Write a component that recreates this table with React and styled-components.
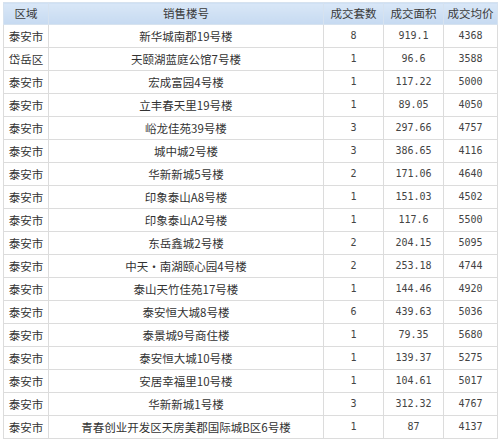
import React from "react";
import styled, { createGlobalStyle } from "styled-components";

const Global = createGlobalStyle`
  html, body { margin: 0; padding: 0; background: #fff; }
  body { font-family: "Noto Sans CJK SC", "Noto Sans", sans-serif; }
`;

const Wrap = styled.div`
  padding: 2px 3px 0 3px;
`;

const Table = styled.table`
  border-collapse: collapse;
  table-layout: fixed;
  width: 494px;
  font-size: 11px;
  color: #333;
`;

const HeadCell = styled.th`
  height: 21px;
  padding: 0;
  font-weight: normal;
  font-size: 11.5px;
  color: #3a3a3a;
  background: linear-gradient(#d9e7f7, #c6daf1);
  border: 1px solid #d6e2ef;
  text-align: center;
  line-height: 21px;
`;

const Cell = styled.td`
  height: 22px;
  padding: 0;
  border: 1px solid #dcdcdc;
  text-align: center;
  line-height: 22px;
  white-space: nowrap;
  overflow: hidden;
  font-family: ${(p) =>
    p.$num ? '"DejaVu Sans Mono", "Liberation Mono", monospace' : "inherit"};
  font-size: ${(p) => (p.$num ? "10px" : "11.5px")};
  color: ${(p) => (p.$num ? "#444" : "#333")};
`;

const rows = [
  ["泰安市", "新华城南郡19号楼", "8", "919.1", "4368"],
  ["岱岳区", "天颐湖蓝庭公馆7号楼", "1", "96.6", "3588"],
  ["泰安市", "宏成富园4号楼", "1", "117.22", "5000"],
  ["泰安市", "立丰春天里19号楼", "1", "89.05", "4050"],
  ["泰安市", "峪龙佳苑39号楼", "3", "297.66", "4757"],
  ["泰安市", "城中城2号楼", "3", "386.65", "4116"],
  ["泰安市", "华新新城5号楼", "2", "171.06", "4640"],
  ["泰安市", "印象泰山A8号楼", "1", "151.03", "4502"],
  ["泰安市", "印象泰山A2号楼", "1", "117.6", "5500"],
  ["泰安市", "东岳鑫城2号楼", "2", "204.15", "5095"],
  ["泰安市", "中天·南湖颐心园4号楼", "2", "253.18", "4744"],
  ["泰安市", "泰山天竹佳苑17号楼", "1", "144.46", "4920"],
  ["泰安市", "泰安恒大城8号楼", "6", "439.63", "5036"],
  ["泰安市", "泰景城9号商住楼", "1", "79.35", "5680"],
  ["泰安市", "泰安恒大城10号楼", "1", "139.37", "5275"],
  ["泰安市", "安居幸福里10号楼", "1", "104.61", "5017"],
  ["泰安市", "华新新城1号楼", "3", "312.32", "4767"],
  ["泰安市", "青春创业开发区天房美郡国际城B区6号楼", "1", "87", "4137"],
];

export default function App() {
  return (
    <>
      <Global />
      <Wrap>
        <Table>
          <colgroup>
            <col style={{ width: 45 }} />
            <col style={{ width: 275 }} />
            <col style={{ width: 60 }} />
            <col style={{ width: 60 }} />
            <col style={{ width: 54 }} />
          </colgroup>
          <thead>
            <tr>
              <HeadCell>区域</HeadCell>
              <HeadCell>销售楼号</HeadCell>
              <HeadCell>成交套数</HeadCell>
              <HeadCell>成交面积</HeadCell>
              <HeadCell>成交均价</HeadCell>
            </tr>
          </thead>
          <tbody>
            {rows.map((r, i) => (
              <tr key={i}>
                <Cell>{r[0]}</Cell>
                <Cell>{r[1]}</Cell>
                <Cell $num>{r[2]}</Cell>
                <Cell $num>{r[3]}</Cell>
                <Cell $num>{r[4]}</Cell>
              </tr>
            ))}
          </tbody>
        </Table>
      </Wrap>
    </>
  );
}
